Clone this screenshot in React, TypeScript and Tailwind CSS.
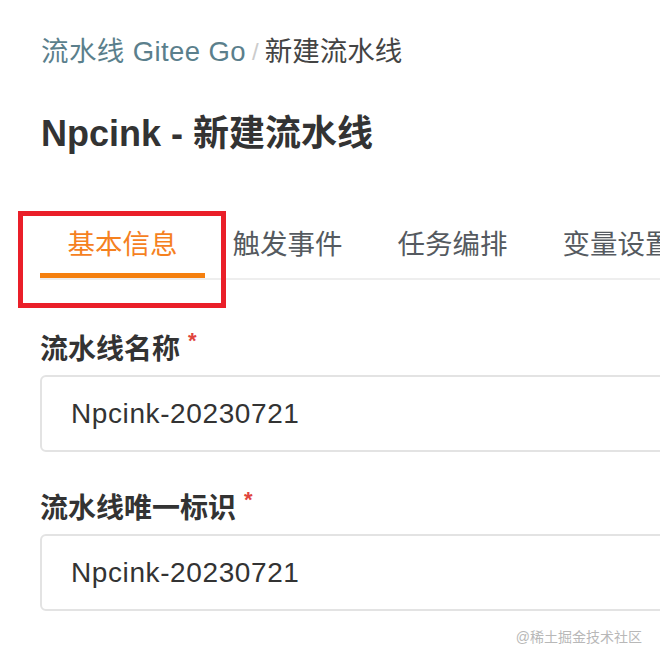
import React from "react";

const font = { fontFamily: '"Liberation Sans", "Noto Sans CJK SC", sans-serif' };

function Field({ label, value }: { label: string; value: string }) {
  return (
    <div className="flex flex-col">
      <div className="flex items-start h-[40px]">
        <span className="text-[28px] font-bold text-[#333333] leading-[40px]">{label}</span>
        <span className="text-[22px] font-bold text-[#e0443e] leading-[22px] ml-[8px]">*</span>
      </div>
      <div className="mt-[5px] h-[77px] w-[640px] rounded-[6px] border-2 border-[#e3e3e3] bg-white flex items-center pl-[29px]">
        <span className="text-[28px] tracking-[0.6px] text-[#333333]">{value}</span>
      </div>
    </div>
  );
}

export default function App() {
  const tabs = ["基本信息", "触发事件", "任务编排", "变量设置"];
  return (
    <div className="w-[660px] h-[668px] bg-white overflow-hidden relative" style={font}>
      <div className="pl-[41px] pt-[34px]">
        <div className="flex items-center h-[36px] text-[27.5px] leading-[36px] whitespace-nowrap">
          <span className="text-[#5b7f8c] tracking-[0.4px]">流水线 Gitee Go</span>
          <span className="text-[#cccccc] mx-[6px] text-[24px]">/</span>
          <span className="text-[#444444]">新建流水线</span>
        </div>
        <div className="mt-[44px] h-[40px] text-[36px] leading-[40px] font-bold text-[#333333] whitespace-nowrap">
          Npcink - 新建流水线
        </div>
      </div>
      <div className="mt-[52px] pl-[40px] relative">
        <div className="flex border-b-2 border-[#eeeeee] h-[74px] overflow-hidden">
          {tabs.map((t, i) => (
            <div key={t} className="relative px-[27.5px] shrink-0 flex items-start pt-[19px]">
              <span
                className={
                  "text-[27.5px] leading-[40px] whitespace-nowrap " +
                  (i === 0 ? "text-[#f5811f]" : "text-[#555a60]")
                }
              >
                {t}
              </span>
              {i === 0 && (
                <div className="absolute left-0 right-0 bottom-0 h-[5px] bg-[#f5800f]" />
              )}
            </div>
          ))}
        </div>
        <div className="absolute left-[18px] top-[5px] w-[208px] h-[97px] border-[5px] border-[#ea1f29]" />
      </div>
      <div className="pl-[40px] pt-[50px] flex flex-col gap-[37px]">
        <Field label="流水线名称" value="Npcink-20230721" />
        <Field label="流水线唯一标识" value="Npcink-20230721" />
      </div>
      <div className="absolute right-[18px] top-[627px] text-[14px] text-[#b8b8b8]">@稀土掘金技术社区</div>
    </div>
  );
}
